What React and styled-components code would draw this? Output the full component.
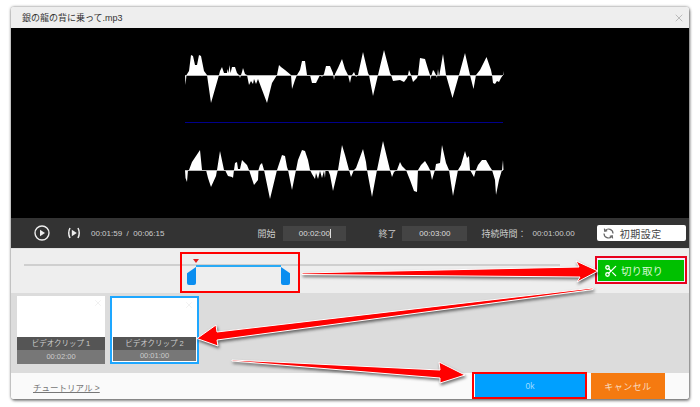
import React from "react";
import styled, { createGlobalStyle } from "styled-components";
import { Scissors, X } from "lucide-react";

const WAVE_TOP = [
  [185, 0], [185.5, 10], [186.5, 0], [189, -4], [191, -20], [193, -19], [195, -10], [197, -10], [199, -20], [201, -19], [204, -4], [207, 0],
  [211, 28], [219, 0], [220, -4], [222, -8], [224, -2], [227, -2], [227.5, -6], [228.5, -2], [229.5, -10], [230.5, -2], [232, -8], [235, -8], [237, -2], [239, 0],
  [240, 3], [241, 0], [242, -3], [243, -7], [245, -1], [247, 0], [249, 10], [251, 6], [253, 9], [254, 4], [256, 9], [258, 4], [261, 12], [267, 28], [272, 8], [277, 0],
  [279, -10], [281, -8], [285, -5], [291, 0], [292, 14], [295, 5], [297, 0], [300, -5], [302, -14], [305, -14], [307, 0], [310, 0], [312, 8], [316, 8], [320, 0],
  [322, 2], [324, -1], [326, -9], [330, -9], [333, -2], [334, 5], [335, -1], [338, -7], [342, -16], [345, -6], [348, 0], [350, 8], [351, 3], [352, 0], [354, -3], [356, 2], [358, 0],
  [363, -23], [368, -2], [369, 0], [373, 21], [378, 0], [384, -25], [390, -2], [391, 0], [393, 6], [400, 5], [404, 7], [407, 3], [408, 0], [409, -5], [411, 0], [413, 7], [417, 3], [418, 0],
  [420, -17], [425, -16], [428, -6], [430, 0], [430.5, 5], [431.5, 0], [433, -5], [434, -4], [436, 0], [437, 3], [438, -6], [439, 2], [443, -21], [446, 0],
  [452.5, 23], [459, 0], [465, -22], [470, 0], [473.5, 14], [476, 0], [480, -5], [486.5, -18], [491, -5], [492, 0], [493, 8], [495, 9], [497, 6], [499, 7], [501, 3], [503, 0], [503, -4], [503.5, 0],
];

const WAVE_BOTTOM = [
  [185, 0], [185.5, 8], [187, 12], [188, 0], [189, 0], [192, -8], [196, -14], [200, -20], [202, 0], [206, 0], [208, 8], [211, 17], [216, 6], [217, 0],
  [220, -19], [224, 0], [225, 0], [228, 6], [232, 7], [233, 8], [234, 0], [235, -7], [237, -8], [238, -1], [240, -1], [242, -10], [247, -5], [249, 0],
  [253, 12], [254, 15], [258, 10], [258.5, 0], [260, -5], [262, -7], [264, 0], [270, 29], [277, 0], [279, -6], [282, -15], [285, -14], [287, -3], [288, 0],
  [292, 20], [296, 0], [298, -10], [302, -20], [305, -19], [308, -10], [310, 0], [312, 4], [315, 9], [316, 3], [318, 9], [320, 1], [322, 8], [324, 1], [325, 8], [325.5, 0], [328, 0],
  [330, 5], [333, 21], [338, 0], [342, -25], [345, -15], [349, 0], [351, 7], [354, 0], [356, -2], [363, -21], [366, -8], [367, 0], [372, 27], [377, 0], [383, -29], [390, 0],
  [392, 7], [394, 2], [397, 0], [400, -8], [402, -4], [406, 0], [410, 10], [414, 21], [417, 22], [418, 0], [421, -5], [425, -9], [428, -4], [430, 0], [432, 10], [435, 0],
  [436, -6], [440, -7], [442, -25], [446, -7], [449, 0], [453, 26], [458, 0], [461, -5], [465, -19], [467, -12], [469, -14], [470, 0], [474, 7], [476, 0], [478, -5], [482, -10], [486, -10], [490, -3], [492, 0],
  [495, 10], [496, 25], [499, 10], [502, 0], [503, -10], [503.5, 0],
];

const ARROWS = [
  "302,273 579,267 576,261 598,271 577,282 580,277 302,274.5",
  "593,288 217,332 216,325 197,338.5 218,346 217,340 593,289.5",
  "232,360 440,370 439,362 465,375 440,383 440,378 232,361",
];

const toPoints = (data) => data.map(([x, d]) => `${x - 185},${d + 35}`).join(" ");

const Wave = ({ data }) => (
  <WaveSvg viewBox="0 0 319 70">
    <polygon points={toPoints(data)} fill="#fff" />
    <line x1="0" y1="35.5" x2="318" y2="35.5" stroke="#bbb" strokeWidth="1" />
  </WaveSvg>
);

const App = () => {
  return (
    <>
      <GlobalStyle />
      <Page>
        <Window>
          <TitleBar>
            <Title>銀の龍の背に乗って.mp3</Title>
            <X size={12} strokeWidth={1.2} color="#999" />
          </TitleBar>
          <Screen>
            <Wave data={WAVE_TOP} />
            <Divider />
            <Wave data={WAVE_BOTTOM} />
          </Screen>
          <ControlBar>
            <svg width="16" height="16" viewBox="0 0 16 16">
              <circle cx="8" cy="8" r="7" fill="none" stroke="#eee" strokeWidth="1.4" />
              <path d="M6 4.8 L11 8 L6 11.2 Z" fill="#eee" />
            </svg>
            <StepIcon width="16" height="16" viewBox="0 0 16 16">
              <path d="M4 3 Q1.5 8 4 13 M12 3 Q14.5 8 12 13" fill="none" stroke="#eee" strokeWidth="1.5" />
              <path d="M5.8 4.8 L10.8 8 L5.8 11.2 Z" fill="#eee" />
            </StepIcon>
            <TimeNow>00:01:59&nbsp; / &nbsp;00:06:15</TimeNow>
            <FieldLabel $left={93}>開始</FieldLabel>
            <TimeField $width={63} $left={8}>
              00:02:00<Caret />
            </TimeField>
            <FieldLabel $left={32}>終了</FieldLabel>
            <TimeField $width={65} $left={6}>00:03:00</TimeField>
            <FieldLabel $left={14}>持続時間：</FieldLabel>
            <TimeNow $left={6}>00:01:00.00</TimeNow>
            <ResetButton>
              <svg width="13" height="13" viewBox="0 0 13 13" fill="none" stroke="#666" strokeWidth="1.2">
                <path d="M11 6.5 A4.5 4.5 0 0 0 3.2 3.5" />
                <path d="M2 6.5 A4.5 4.5 0 0 0 9.8 9.5" />
                <path d="M2.4 1.6 L2.8 4.2 L5.2 3.6" />
                <path d="M10.6 11.4 L10.2 8.8 L7.8 9.4" />
              </svg>
              初期設定
            </ResetButton>
          </ControlBar>
          <SliderPanel>
            <Track />
            <Selection />
            <Playhead />
            <Handle $left={176} />
            <Handle $left={270} $flip />
            <Callout />
            <CutWrap>
              <CutButton>
                <Scissors size={14} strokeWidth={2.2} color="#fff" />
                切り取り
              </CutButton>
            </CutWrap>
          </SliderPanel>
          <ClipPanel>
            <Clip name="ビデオクリップ 1" time="00:02:00" />
            <Clip name="ビデオクリップ 2" time="00:01:00" selected />
          </ClipPanel>
          <Footer>
            <Tutorial>チュートリアル &gt;</Tutorial>
            <OkWrap>
              <OkButton>0k</OkButton>
            </OkWrap>
            <CancelButton>キャンセル</CancelButton>
          </Footer>
        </Window>
        <ArrowLayer viewBox="0 0 700 407">
          {ARROWS.map((points) => (
            <polygon key={points} points={points} fill="#f00" stroke="#fff" strokeWidth="1" />
          ))}
        </ArrowLayer>
      </Page>
    </>
  );
};

const Clip = ({ name, time, selected }) => (
  <ClipCard $selected={selected}>
    <ClipThumb>
      <X size={10} strokeWidth={1} color="#ddd" />
    </ClipThumb>
    <ClipName>{name}</ClipName>
    <ClipTime $selected={selected}>{time}</ClipTime>
  </ClipCard>
);

export default App;

const GlobalStyle = createGlobalStyle`
  html, body {
    margin: 0;
    padding: 0;
    background: #fff;
  }
  body {
    font-family: "Liberation Sans", "Noto Sans CJK JP", sans-serif;
  }
`;

const Page = styled.div`
  position: relative;
  width: 700px;
  height: 407px;
  padding: 7px 11px 8px;
  box-sizing: border-box;
  overflow: hidden;
`;

const Window = styled.div`
  display: flex;
  flex-direction: column;
  width: 678px;
  height: 392px;
  border-radius: 3px;
  overflow: hidden;
  box-shadow: 0 0 3px rgba(0, 0, 0, 0.55), 1px 2px 3px rgba(0, 0, 0, 0.4);
`;

const TitleBar = styled.div`
  display: flex;
  align-items: center;
  justify-content: space-between;
  height: 21px;
  padding: 0 4px 0 11px;
  background: #eeeeee;
  flex: none;
`;

const Title = styled.span`
  font-size: 9px;
  color: #333;
`;

const Screen = styled.div`
  display: flex;
  flex-direction: column;
  align-items: flex-start;
  height: 190px;
  padding: 12px 0 0 174px;
  box-sizing: border-box;
  background: #000;
  flex: none;
`;

const WaveSvg = styled.svg`
  display: block;
  width: 319px;
  height: 70px;
  flex: none;
`;

const Divider = styled.div`
  width: 318px;
  height: 1px;
  margin: 12px 0 12px;
  background: #00008b;
  flex: none;
`;

const ControlBar = styled.div`
  display: flex;
  align-items: center;
  height: 30px;
  padding-left: 23px;
  background: #333333;
  color: #ddd;
  flex: none;
`;

const StepIcon = styled.svg`
  margin-left: 16px;
`;

const TimeNow = styled.span`
  margin-left: ${(p) => p.$left ?? 9}px;
  font-size: 8px;
  color: #ccc;
  white-space: nowrap;
`;

const FieldLabel = styled.span`
  margin-left: ${(p) => p.$left}px;
  font-size: 9px;
  color: #ccc;
  white-space: nowrap;
`;

const TimeField = styled.div`
  display: flex;
  align-items: center;
  justify-content: center;
  width: ${(p) => p.$width}px;
  height: 15px;
  margin-left: ${(p) => p.$left}px;
  background: #444444;
  font-size: 8px;
  color: #ddd;
`;

const Caret = styled.span`
  width: 1px;
  height: 9px;
  background: #ddd;
`;

const ResetButton = styled.div`
  display: flex;
  align-items: center;
  gap: 5px;
  width: 89px;
  height: 16px;
  margin-left: 22px;
  padding-left: 5px;
  box-sizing: border-box;
  border-radius: 2px;
  background: #fff;
  font-size: 10px;
  letter-spacing: 0.5px;
  color: #444;
`;

const SliderPanel = styled.div`
  position: relative;
  display: flex;
  justify-content: flex-end;
  align-items: flex-start;
  height: 45px;
  padding: 7px 2px 0 0;
  box-sizing: border-box;
  background: #eeeeee;
  border-top: 1px solid #e2e2e2;
  flex: none;
`;

const Track = styled.div`
  position: absolute;
  left: 13px;
  top: 15px;
  width: 536px;
  height: 2px;
  background: #cfcfcf;
`;

const Selection = styled.div`
  position: absolute;
  left: 185px;
  top: 16px;
  width: 85px;
  height: 2px;
  background: #29aaf5;
`;

const Playhead = styled.div`
  position: absolute;
  left: 182px;
  top: 10px;
  width: 0;
  height: 0;
  border-left: 3.5px solid transparent;
  border-right: 3.5px solid transparent;
  border-top: 4px solid #e02020;
`;

const Handle = styled.div`
  position: absolute;
  left: ${(p) => p.$left}px;
  top: 18px;
  width: 9px;
  height: 18px;
  background: #0a8ef0;
  border-radius: 0 0 2px 2px;
  clip-path: ${(p) =>
    p.$flip
      ? "polygon(0 0, 100% 35%, 100% 100%, 0 100%)"
      : "polygon(100% 0, 0 35%, 0 100%, 100% 100%)"};
`;

const Callout = styled.div`
  position: absolute;
  left: 169px;
  top: 3px;
  width: 116px;
  height: 37px;
  border: 2px solid #f00;
`;

const CutWrap = styled.div`
  border: 2px solid #e8001c;
  padding: 2px 1px 1px;
  background: #eef;
`;

const CutButton = styled.div`
  display: flex;
  align-items: center;
  gap: 3px;
  width: 86px;
  height: 21px;
  padding-left: 6px;
  box-sizing: border-box;
  background: #00c000;
  color: #d8f8d4;
  font-size: 10.5px;
`;

const ClipPanel = styled.div`
  display: flex;
  gap: 5px;
  height: 80px;
  padding: 3px 0 0 6px;
  box-sizing: border-box;
  background: #dcdcdc;
  flex: none;
`;

const ClipCard = styled.div`
  display: flex;
  flex-direction: column;
  width: ${(p) => (p.$selected ? 89 : 88)}px;
  height: 68px;
  box-sizing: border-box;
  border: ${(p) => (p.$selected ? "2px solid #1ea7ff" : "0")};
  padding: ${(p) => (p.$selected ? "0 1px 1px" : "0")};
  background: #fff;
`;

const ClipThumb = styled.div`
  display: flex;
  justify-content: flex-end;
  flex: 1;
  padding: 2px 2px 0 0;
  background: #fff;
`;

const ClipName = styled.div`
  height: 13px;
  line-height: 13px;
  background: #555555;
  color: #ccc;
  font-size: 7.5px;
  text-align: center;
`;

const ClipTime = styled.div`
  height: ${(p) => (p.$selected ? 11 : 14)}px;
  line-height: ${(p) => (p.$selected ? 11 : 14)}px;
  background: #777777;
  color: #ccc;
  font-size: 7.5px;
  text-align: center;
`;

const Footer = styled.div`
  display: flex;
  align-items: stretch;
  height: 26px;
  padding-left: 22px;
  background: #fafafa;
  flex: 1;
`;

const Tutorial = styled.span`
  align-self: center;
  margin-top: 1px;
  font-size: 8.5px;
  color: #777;
  text-decoration: underline;
`;

const OkWrap = styled.div`
  margin-left: auto;
  height: 27px;
  margin-top: -1px;
  border: 2px solid #f00;
  box-sizing: border-box;
  padding-left: 1px;
  background: #fff;
`;

const OkButton = styled.div`
  display: flex;
  align-items: center;
  justify-content: center;
  width: 110px;
  height: 100%;
  background: #00a0ff;
  color: #9fdcff;
  font-size: 8.5px;
`;

const CancelButton = styled.div`
  display: flex;
  align-items: center;
  justify-content: center;
  width: 74px;
  margin: 0 24px 0 4px;
  background: #f57a10;
  color: #f8dcc0;
  font-size: 9px;
  letter-spacing: 0.5px;
`;

const ArrowLayer = styled.svg`
  position: absolute;
  left: 0;
  top: 0;
  width: 700px;
  height: 407px;
  pointer-events: none;
  filter: drop-shadow(1px 2px 1.5px rgba(0, 0, 0, 0.55));
`;
